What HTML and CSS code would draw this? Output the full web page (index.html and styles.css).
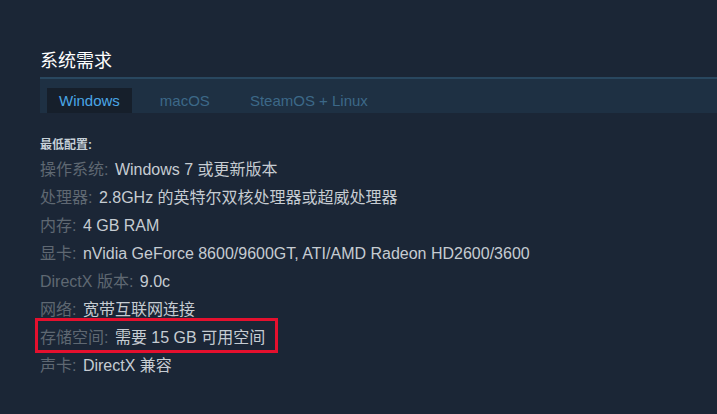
FILE: index.html
```html
<!DOCTYPE html>
<html lang="zh-CN">
<head>
    <meta charset="UTF-8">
    <meta name="viewport" content="width=device-width, initial-scale=1.0">
    <title>系统需求</title>
    <link rel="stylesheet" href="styles.css">
</head>
<body>

    <div class="sysreq">
        <h2 class="sysreq__title">系统需求</h2>

        <div class="sysreq__tabs">
            <div class="sysreq__tab active">Windows</div>
            <div class="sysreq__tab">macOS</div>
            <div class="sysreq__tab">SteamOS + Linux</div>
        </div>

        <div class="sysreq__contents">
            <div class="sysreq__min">最低配置:</div>
            <ul class="sysreq__list">
                <li><span class="label">操作系统:</span> Windows 7 或更新版本</li>
                <li><span class="label">处理器:</span> 2.8GHz 的英特尔双核处理器或超威处理器</li>
                <li><span class="label">内存:</span> 4 GB RAM</li>
                <li><span class="label">显卡:</span> nVidia GeForce 8600/9600GT, ATI/AMD Radeon HD2600/3600</li>
                <li><span class="label">DirectX 版本:</span> 9.0c</li>
                <li><span class="label">网络:</span> 宽带互联网连接</li>
                <li class="marked"><span class="label">存储空间:</span> 需要 15 GB 可用空间</li>
                <li><span class="label">声卡:</span> DirectX 兼容</li>
            </ul>
        </div>
    </div>

</body>
</html>
```

FILE: styles.css
```css
body {
    margin: 0;
    background-color: #1b2636;
    font-family: "Liberation Sans", Arial, "Noto Sans CJK SC", sans-serif;
    color: #c6d0d8;
    overflow: hidden;
}

.sysreq {
    padding: 50px 0 0 40px;
}

.sysreq__title {
    margin: 0 0 5px 0;
    font-size: 18px;
    font-weight: normal;
    line-height: 22px;
    color: #ffffff;
}

.sysreq__tabs {
    display: flex;
    gap: 16px;
    padding: 9px 0 0 7px;
    background-color: #1e3043;
    border-top: 2px solid #29475f;
    height: 25px;
}

.sysreq__tab {
    padding: 0 12px;
    font-size: 15px;
    line-height: 25px;
    color: #3c6888;
}

.sysreq__tab.active {
    background-color: #161f2b;
    color: #4aa6e6;
}

.sysreq__contents {
    padding-top: 24px;
}

.sysreq__min {
    font-size: 12px;
    font-weight: bold;
    line-height: 16px;
    color: #c6d0d8;
    margin-bottom: 3px;
}

.sysreq__list {
    list-style: none;
    margin: 0;
    padding: 0;
}

.sysreq__list li {
    position: relative;
    font-size: 16px;
    line-height: 28px;
    height: 28px;
    color: #c6ccd2;
    white-space: nowrap;
}

.label {
    color: #5f6872;
    margin-right: 2px;
}

/* рамка вокруг строки */
.marked::after {
    content: "";
    position: absolute;
    left: -5px;
    top: -6px;
    width: 237px;
    height: 29px;
    border: 3px solid #e5102e;
    pointer-events: none;
}
```
